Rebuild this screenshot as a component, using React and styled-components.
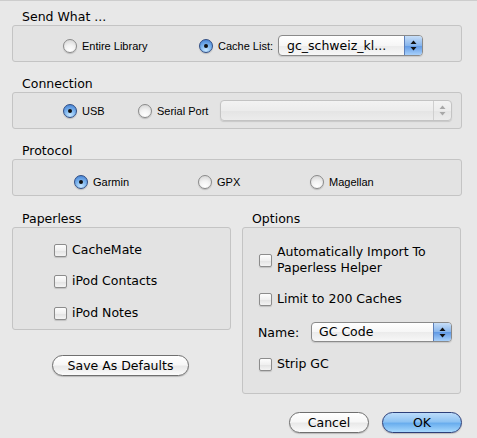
import React from "react";
import styled, { createGlobalStyle, css } from "styled-components";

const GlobalStyle = createGlobalStyle`
  html, body {
    margin: 0;
    padding: 0;
    background: #e8e8e8;
  }
  body {
    font-family: "DejaVu Sans", "Liberation Sans", sans-serif;
    color: #000;
  }
`;

const Window = styled.div`
  width: 477px;
  height: 438px;
  box-sizing: border-box;
  padding: 8px 15px 0 12px;
  border-top: 1px solid #cdcdcd;
  background: #e8e8e8;
  display: flex;
  flex-direction: column;
  overflow: hidden;
`;

const SectionLabel = styled.div`
  font-size: 12.5px;
  line-height: 16px;
  height: 16px;
  padding-left: 10px;
  margin-top: ${(p) => p.$mt || 0}px;
`;

const GroupBox = styled.div`
  box-sizing: border-box;
  border: 1px solid #c4c4c4;
  border-radius: 3px;
  background: #e3e3e3;
`;

const RadioBox = styled(GroupBox)`
  height: 37px;
  display: flex;
  align-items: center;
  padding-top: ${(p) => p.$pt || 0}px;
  padding-left: ${(p) => p.$pl}px;
`;

const RadioItem = styled.label`
  display: flex;
  align-items: center;
  gap: 5px;
  flex: none;
  width: ${(p) => (p.$w ? `${p.$w}px` : "auto")};
  font-family: "Liberation Sans", Arial, sans-serif;
  font-size: 11px;
`;

const Radio = styled.span`
  position: relative;
  box-sizing: border-box;
  width: 14px;
  height: 14px;
  border-radius: 50%;
  flex: none;
  box-shadow: 0 1px 1px rgba(0, 0, 0, 0.18);
  ${(p) =>
    p.$checked
      ? css`
          border: 1px solid #2f4d84;
          background: radial-gradient(circle at 50% 85%, #c6e6ff 0%, #7fb6ee 45%, #3a78cf 100%);
          &::after {
            content: "";
            position: absolute;
            left: 4px;
            top: 4px;
            width: 4px;
            height: 4px;
            border-radius: 50%;
            background: #111;
          }
        `
      : css`
          border: 1px solid #8a8a8a;
          background: radial-gradient(circle at 50% 85%, #ffffff 0%, #f2f2f2 45%, #cfcfcf 100%);
        `}
`;

const PopUp = styled.div`
  box-sizing: border-box;
  display: flex;
  align-items: stretch;
  width: ${(p) => p.$w}px;
  height: ${(p) => p.$h || 21}px;
  margin-left: ${(p) => p.$ml || 0}px;
  border-radius: 4px;
  border: 1px solid ${(p) => (p.$disabled ? "#c3c3c3" : "#8a8a8a")};
  background: ${(p) =>
    p.$disabled
      ? "linear-gradient(#f3f3f3, #ececec 50%, #e4e4e4 51%, #ececec)"
      : "linear-gradient(#ffffff, #f6f6f6 50%, #ebebeb 51%, #f7f7f7)"};
  box-shadow: 0 1px 1px rgba(0, 0, 0, 0.12);
  overflow: hidden;
  flex: none;
`;

const PopUpText = styled.span`
  flex: 1;
  padding-left: ${(p) => p.$pl || 8}px;
  font-size: 12.5px;
  line-height: ${(p) => (p.$h || 21) - 2}px;
  white-space: nowrap;
`;

const PopUpArrows = styled.span`
  width: 17px;
  flex: none;
  display: flex;
  align-items: center;
  justify-content: center;
  ${(p) =>
    p.$disabled
      ? css`
          border-left: 1px solid #cfcfcf;
        `
      : css`
          border-left: 1px solid #5d7fb8;
          background: linear-gradient(#c7def8, #87b5ec 50%, #5f98e4 51%, #a7d0fb);
        `}
`;

const Arrows = ({ color }) => (
  <svg width="7" height="11" viewBox="0 0 7 11">
    <path d="M3.5 0.5 L6.5 4 L0.5 4 Z" fill={color} />
    <path d="M3.5 10.5 L6.5 7 L0.5 7 Z" fill={color} />
  </svg>
);

const Columns = styled.div`
  display: grid;
  grid-template-columns: 219px 219px;
  column-gap: 11px;
  margin-top: 15px;
`;

const Column = styled.div`
  display: flex;
  flex-direction: column;
`;

const CheckBox = styled(GroupBox)`
  height: ${(p) => p.$h}px;
  display: flex;
  flex-direction: column;
  padding: ${(p) => p.$pad};
`;

const CheckItem = styled.label`
  display: flex;
  align-items: center;
  gap: 5px;
  height: ${(p) => p.$h || 18}px;
  margin-top: ${(p) => p.$mt || 0}px;
  font-size: 12.5px;
  line-height: 16px;
`;

const Check = styled.span`
  box-sizing: border-box;
  width: 13px;
  height: 13px;
  flex: none;
  border: 1px solid #8c8c8c;
  border-radius: 2px;
  background: linear-gradient(#fdfdfd, #f0f0f0 50%, #e2e2e2 51%, #f4f4f4);
  box-shadow: 0 1px 1px rgba(0, 0, 0, 0.15);
`;

const NameRow = styled.div`
  display: flex;
  align-items: center;
  height: 20px;
  margin-top: 14px;
  margin-left: -1px;
  font-size: 12.5px;
`;

const NameLabel = styled.span`
  width: 53px;
`;

const AquaButton = styled.button`
  box-sizing: border-box;
  height: 21px;
  width: ${(p) => p.$w}px;
  border-radius: 11px;
  font-family: "DejaVu Sans", sans-serif;
  font-size: 12.5px;
  color: #000;
  padding: 0;
  line-height: 19px;
  box-shadow: 0 1px 1px rgba(0, 0, 0, 0.2);
  ${(p) =>
    p.$primary
      ? css`
          border: 1px solid #2c3f79;
          background: linear-gradient(#bcdcfa, #8ec3f3 45%, #6aaeee 55%, #a6d8fd);
        `
      : css`
          border: 1px solid #6f6f6f;
          background: linear-gradient(#ffffff, #f7f7f7 45%, #e9e9e9 55%, #fbfbfb);
        `}
`;

const SaveWrap = styled.div`
  display: flex;
  justify-content: center;
  padding-right: 2px;
  margin-top: 25px;
`;

const Footer = styled.div`
  display: flex;
  justify-content: flex-end;
  gap: 13px;
  margin-top: 18px;
`;

export default function App() {
  return (
    <Window>
      <GlobalStyle />
      <SectionLabel>Send What ...</SectionLabel>
      <RadioBox $pt={4} $pl={50}>
        <RadioItem $w={136}>
          <Radio />
          Entire Library
        </RadioItem>
        <RadioItem $w={79}>
          <Radio $checked />
          Cache List:
        </RadioItem>
        <PopUp $w={145}>
          <PopUpText>gc_schweiz_kl...</PopUpText>
          <PopUpArrows>
            <Arrows color="#111" />
          </PopUpArrows>
        </PopUp>
      </RadioBox>

      <SectionLabel $mt={14}>Connection</SectionLabel>
      <RadioBox $pl={50}>
        <RadioItem $w={75}>
          <Radio $checked />
          USB
        </RadioItem>
        <RadioItem $w={82}>
          <Radio />
          Serial Port
        </RadioItem>
        <PopUp $w={232} $disabled>
          <PopUpText />
          <PopUpArrows $disabled>
            <Arrows color="#a8a8a8" />
          </PopUpArrows>
        </PopUp>
      </RadioBox>

      <SectionLabel $mt={14}>Protocol</SectionLabel>
      <RadioBox $pt={9} $pl={61}>
        <RadioItem $w={124}>
          <Radio $checked />
          Garmin
        </RadioItem>
        <RadioItem $w={112}>
          <Radio />
          GPX
        </RadioItem>
        <RadioItem>
          <Radio />
          Magellan
        </RadioItem>
      </RadioBox>

      <Columns>
        <Column>
          <SectionLabel>Paperless</SectionLabel>
          <CheckBox $h={103} $pad="13px 0 0 41px">
            <CheckItem>
              <Check />
              CacheMate
            </CheckItem>
            <CheckItem $mt={13}>
              <Check />
              iPod Contacts
            </CheckItem>
            <CheckItem $mt={14}>
              <Check />
              iPod Notes
            </CheckItem>
          </CheckBox>
          <SaveWrap>
            <AquaButton $w={137}>Save As Defaults</AquaButton>
          </SaveWrap>
        </Column>
        <Column>
          <SectionLabel>Options</SectionLabel>
          <CheckBox $h={167} $pad="16px 0 0 16px">
            <CheckItem $h={32}>
              <Check />
              <span>
                Automatically Import To
                <br />
                Paperless Helper
              </span>
            </CheckItem>
            <CheckItem $mt={14}>
              <Check />
              Limit to 200 Caches
            </CheckItem>
            <NameRow>
              <NameLabel>Name:</NameLabel>
              <PopUp $w={141} $h={20}>
                <PopUpText $pl={7} $h={20}>
                  GC Code
                </PopUpText>
                <PopUpArrows>
                  <Arrows color="#111" />
                </PopUpArrows>
              </PopUp>
            </NameRow>
            <CheckItem $mt={13}>
              <Check />
              Strip GC
            </CheckItem>
          </CheckBox>
        </Column>
      </Columns>

      <Footer>
        <AquaButton $w={80}>Cancel</AquaButton>
        <AquaButton $w={80} $primary>
          OK
        </AquaButton>
      </Footer>
    </Window>
  );
}
